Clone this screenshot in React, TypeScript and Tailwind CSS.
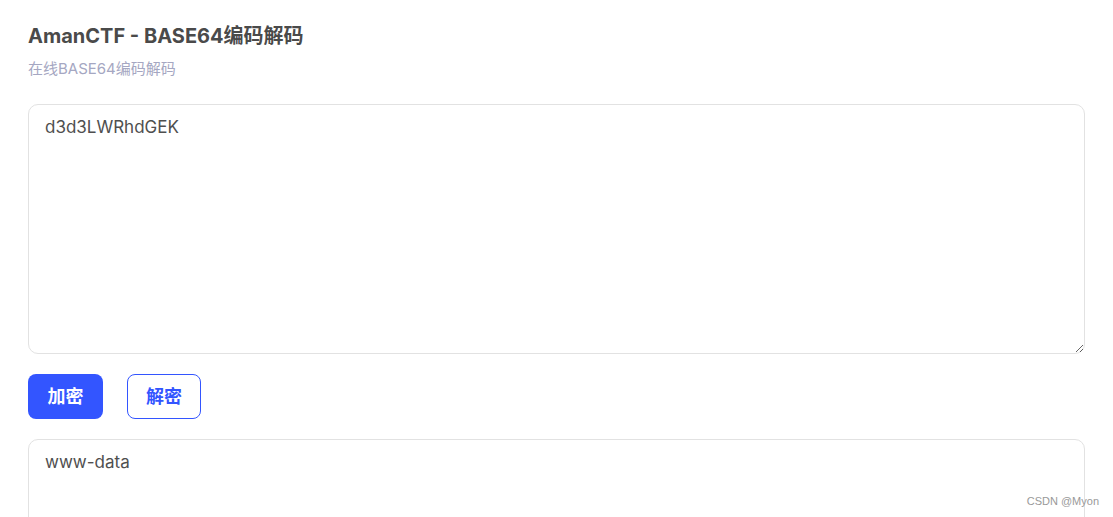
export default function App() {
  return (
    <div className="relative h-[517px] overflow-hidden bg-white px-7 pt-[22px] font-['Inter','Noto_Sans_CJK_SC',sans-serif]">
      <h1 className="text-[20px] font-bold leading-7 text-[#4a4a4a]">
        AmanCTF - BASE64编码解码
      </h1>
      <p className="mt-[9px] text-[15px] leading-5 text-[#a5a7c2]">在线BASE64编码解码</p>

      <textarea
        className="mt-[25px] block h-[250px] w-full rounded-[10px] border border-[#e2e2e2] px-4 py-[10px] text-[17px] leading-6 text-[#4f4f4f] outline-none"
        defaultValue="d3d3LWRhdGEK"
      />

      <div className="mt-5 flex gap-6">
        <button className="h-[45px] w-[75px] rounded-lg bg-[#3355ff] text-lg font-bold text-white">
          加密
        </button>
        <button className="h-[45px] w-[74px] rounded-lg border border-[#3355ff] bg-white text-lg font-bold text-[#3355ff]">
          解密
        </button>
      </div>

      <textarea
        className="mt-5 block h-[250px] w-full rounded-[10px] border border-[#e2e2e2] px-4 py-[10px] text-[17px] leading-6 text-[#4f4f4f] outline-none"
        defaultValue="www-data"
      />

      <div className="absolute bottom-[8px] right-[14px] font-['Liberation_Sans',sans-serif] text-[11px] text-[#999]">
        CSDN @Myon⁠
      </div>
    </div>
  );
}
